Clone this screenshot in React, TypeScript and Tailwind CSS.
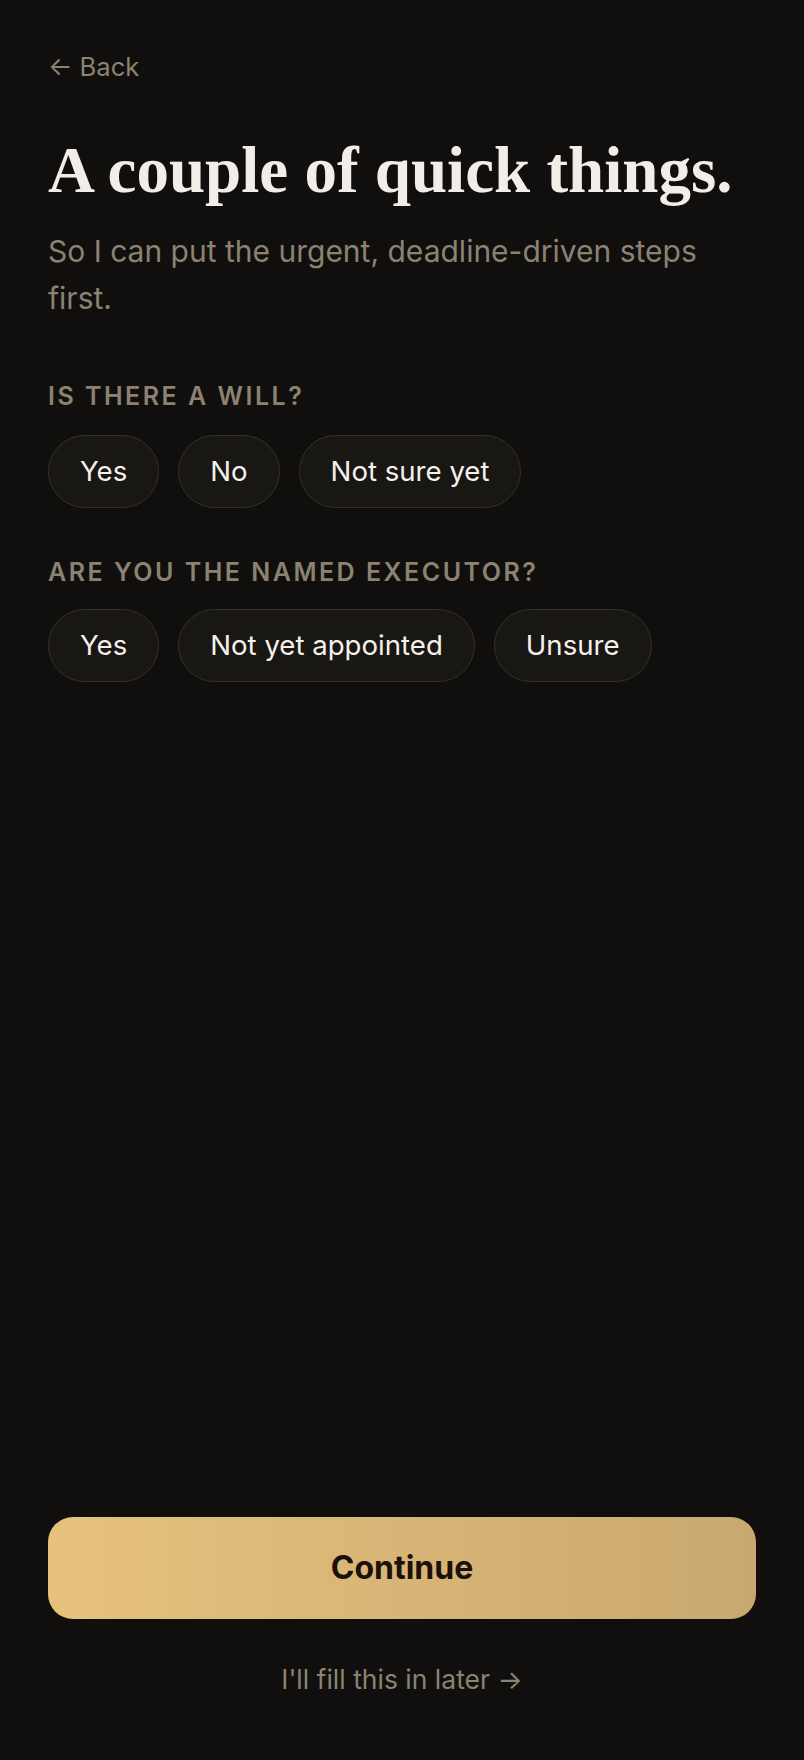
import { useState } from "react";

const sans = "font-['Inter','Noto_Sans',sans-serif]";

type Option = { id: string; label: string };

const willOptions: Option[] = [
  { id: "yes", label: "Yes" },
  { id: "no", label: "No" },
  { id: "unsure", label: "Not sure yet" },
];

const executorOptions: Option[] = [
  { id: "yes", label: "Yes" },
  { id: "pending", label: "Not yet appointed" },
  { id: "unsure", label: "Unsure" },
];

function Question({
  label,
  options,
  value,
  onChange,
  gap,
}: {
  label: string;
  options: Option[];
  value: string | null;
  onChange: (id: string) => void;
  gap: string;
}) {
  return (
    <div>
      <p className="text-[25px] leading-[32px] font-semibold tracking-[0.1em] text-[#8c8272]">{label}</p>
      <div className={`${gap} flex flex-wrap gap-[19px]`}>
        {options.map((o) => (
          <button
            key={o.id}
            type="button"
            onClick={() => onChange(o.id)}
            className={
              value === o.id
                ? "h-[73px] rounded-full border-[1.5px] border-[#d9b677] bg-[#2a2318] px-[31px] text-[27.6px] text-[#f5f1ea]"
                : "h-[73px] rounded-full border-[1.5px] border-[#35302a] bg-[#191714] px-[31px] text-[27.6px] text-[#f5f1ea]"
            }
          >
            {o.label}
          </button>
        ))}
      </div>
    </div>
  );
}

export default function App() {
  const [will, setWill] = useState<string | null>(null);
  const [executor, setExecutor] = useState<string | null>(null);

  return (
    <div className={`${sans} flex h-[1760px] flex-col bg-[#110f0d] px-12 antialiased`}>
      <div className="pt-[48px]">
        <button type="button" className="text-[25.6px] leading-[38px] text-[#8c8272]">
          ← Back
        </button>

        <h1 className="mt-[50px] font-['Liberation_Serif','Times_New_Roman',serif] text-[65px] leading-[68px] font-bold text-[#f2eee7]">
          A couple of quick things.
        </h1>

        <p className="mt-[24px] max-w-[680px] text-[30px] leading-[47px] text-[#8c8272]">
          So I can put the urgent, deadline-driven steps first.
        </p>

        <div className="mt-[58px]">
          <Question label="IS THERE A WILL?" options={willOptions} value={will} onChange={setWill} gap="mt-[23px]" />
        </div>
        <div className="mt-[48px]">
          <Question
            label="ARE YOU THE NAMED EXECUTOR?"
            options={executorOptions}
            value={executor}
            onChange={setExecutor}
            gap="mt-[21px]"
          />
        </div>
      </div>

      <div className="flex-1" />

      <div className="pb-[61px]">
        <button
          type="button"
          className="h-[102px] w-full rounded-[25px] bg-gradient-to-r from-[#e7c27d] to-[#c9a870] text-[32px] font-bold text-[#1a120a]"
        >
          Continue
        </button>
        <div className="mt-[41px] text-center">
          <button type="button" className="text-[26.5px] leading-[39px] text-[#8c8272]">
            I'll fill this in later →
          </button>
        </div>
      </div>
    </div>
  );
}
